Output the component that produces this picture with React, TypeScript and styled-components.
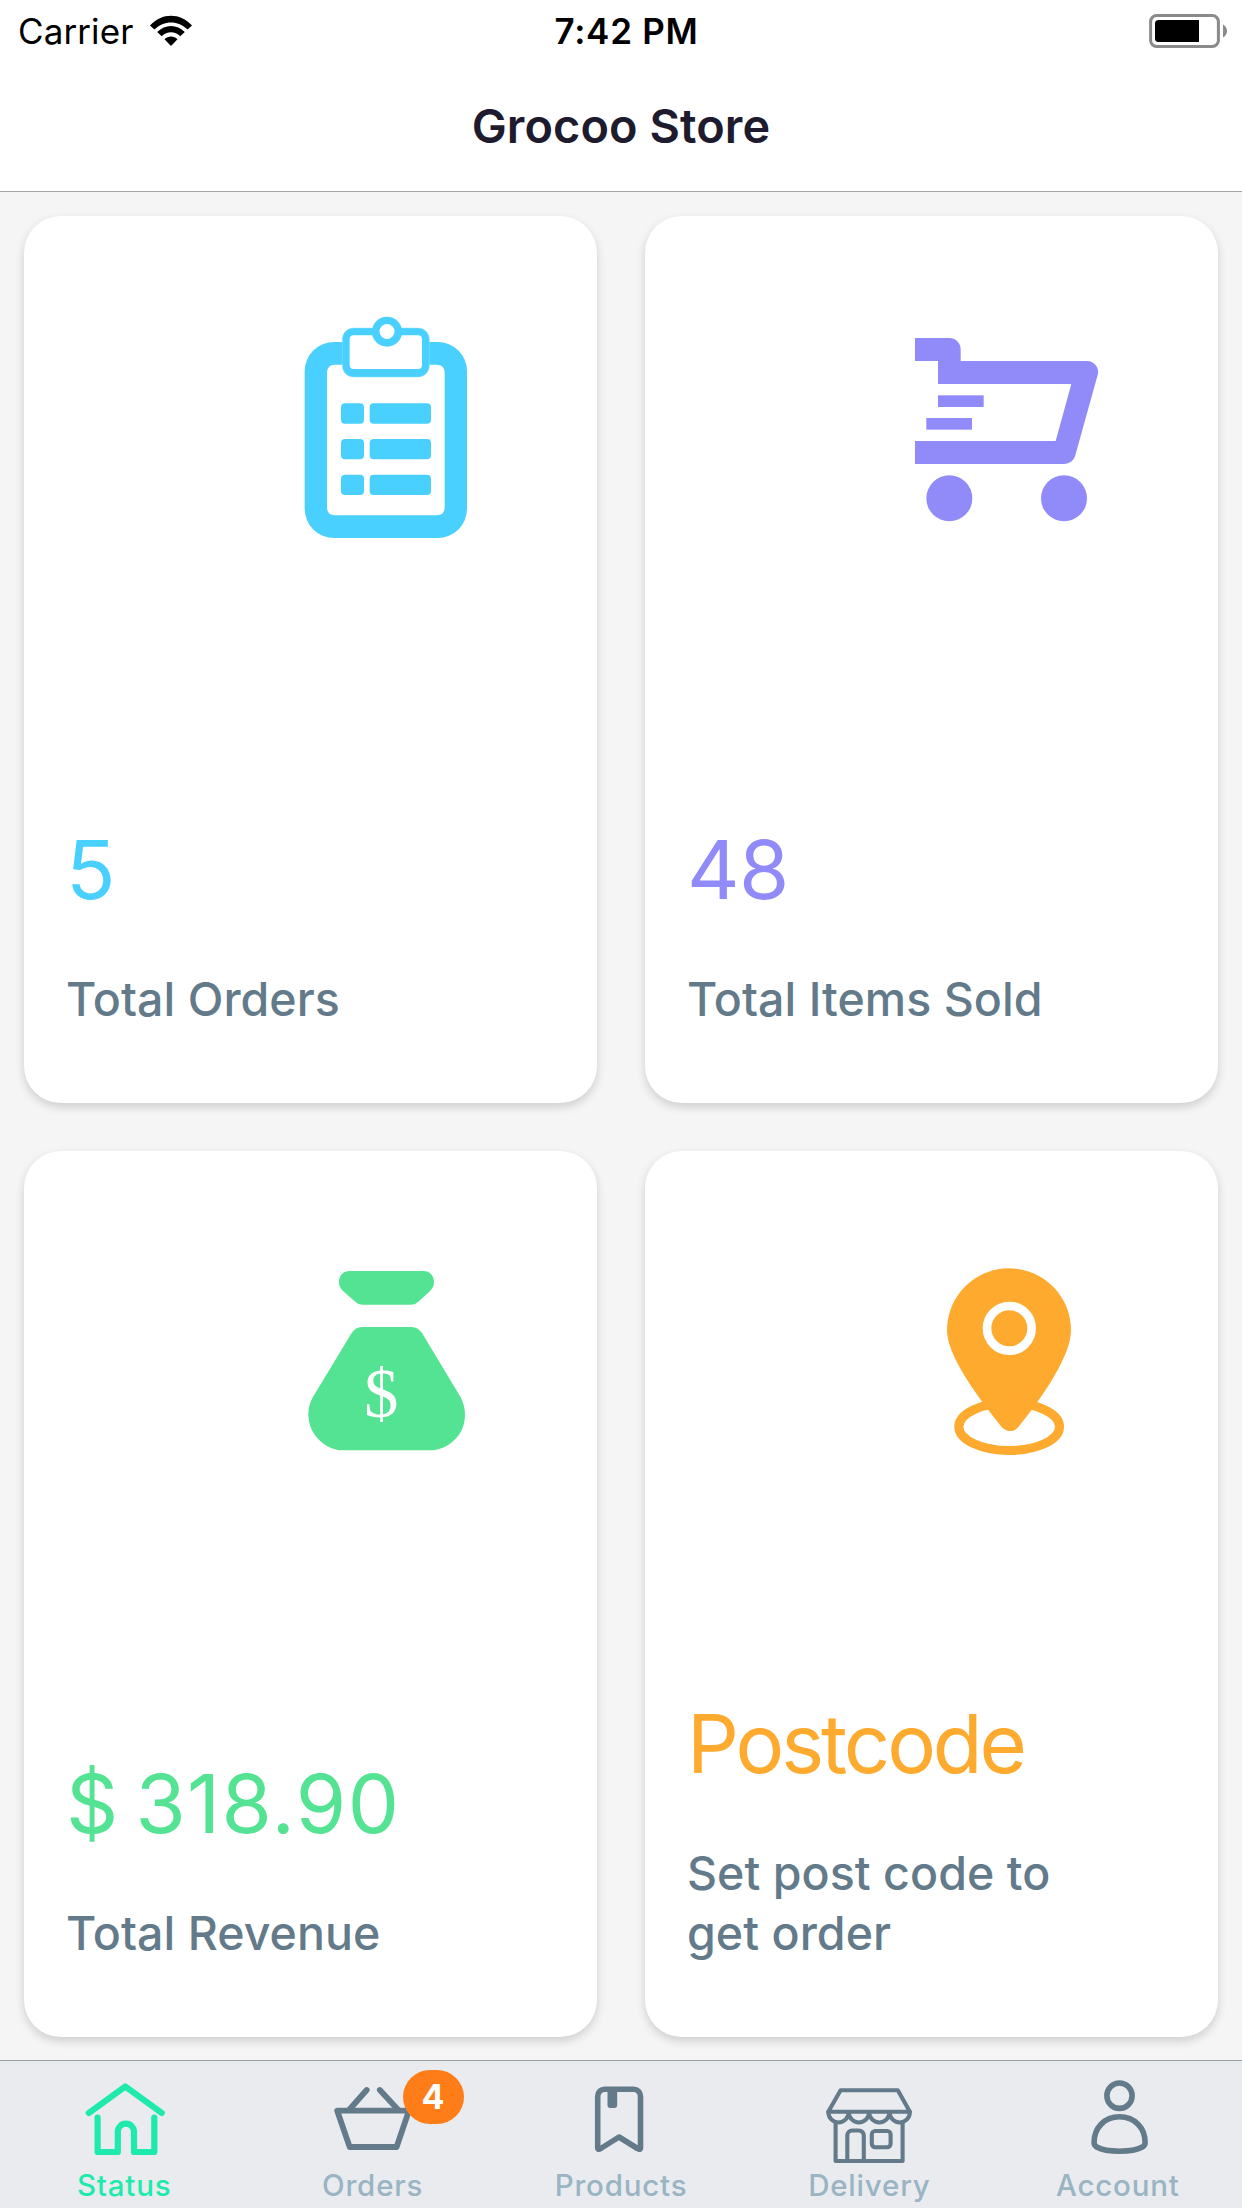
import React from "react";
import styled, { createGlobalStyle } from "styled-components";

const GlobalStyle = createGlobalStyle`
  * { box-sizing: border-box; }
  body { margin: 0; background: #f5f5f5; }
`;

const Screen = styled.div`
  width: 1242px;
  height: 2208px;
  display: flex;
  flex-direction: column;
  overflow: hidden;
  background: #f5f5f5;
  font-family: Inter, "Liberation Sans", sans-serif;
`;

const Header = styled.header`
  height: 192px;
  flex: none;
  background: #fff;
  border-bottom: 1px solid #a3a3a3;
`;

const StatusBar = styled.div`
  height: 60px;
  padding: 0 14px 0 18px;
  display: grid;
  grid-template-columns: 1fr auto 1fr;
  align-items: center;
  color: #000;
  font-size: 35px;
  line-height: 62px;
`;

const Carrier = styled.div`
  display: flex;
  align-items: center;
  gap: 16px;
  letter-spacing: 0.1px;
`;

const Clock = styled.div`
  padding-left: 7px;
  font-weight: 600;
  letter-spacing: 0.7px;
`;

const BatterySlot = styled.div`
  display: flex;
  justify-content: flex-end;
`;

const Title = styled.h1`
  margin: 0;
  text-align: center;
  font-size: 46.8px;
  font-weight: 600;
  letter-spacing: 0.1px;
  line-height: 132px;
  color: #1d1b2d;
`;

const Grid = styled.main`
  flex: 1;
  padding: 24px 24px 23px;
  display: grid;
  grid-template-columns: 1fr 1fr;
  grid-template-rows: 887px 886px;
  gap: 48px;
`;

const Card = styled.section<{ $accent: string }>`
  display: flex;
  flex-direction: column;
  padding: 84px 42px 74px;
  border-radius: 37px;
  background: #fff;
  color: ${(p) => p.$accent};
  box-shadow: 0 4px 10px rgba(0, 0, 0, 0.16);
`;

const CardIcon = styled.svg`
  width: 220px;
  height: 260px;
  margin: 0 0 auto 210px;
  fill: currentColor;
`;

const Value = styled.div<{ $spacing: number; $wordSpacing?: number }>`
  font-size: 81.4px;
  line-height: 100px;
  margin-bottom: 49px;
  letter-spacing: ${(p) => p.$spacing}px;
  word-spacing: ${(p) => p.$wordSpacing ?? 0}px;
  white-space: nowrap;
`;

const Label = styled.div`
  max-width: 400px;
  font-size: 46.5px;
  font-weight: 500;
  letter-spacing: 0.05px;
  line-height: 60px;
  color: #637a8a;
`;

const TabBar = styled.nav`
  height: 148px;
  flex: none;
  display: grid;
  grid-template-columns: repeat(5, 1fr);
  background: #eaebef;
  border-top: 1px solid #97a0a4;
`;

const Tab = styled.div<{ $active?: boolean }>`
  position: relative;
  display: flex;
  flex-direction: column;
  align-items: center;
  padding-top: 5px;
  color: ${(p) => (p.$active ? "#1deaac" : "#637a8a")};
`;

const TabIcon = styled.svg`
  width: 100px;
  height: 100px;
  fill: none;
  stroke: currentColor;
  stroke-linecap: round;
  stroke-linejoin: round;
`;

const TabLabel = styled.span<{ $active?: boolean }>`
  font-size: 29.5px;
  font-weight: 500;
  letter-spacing: 0.8px;
  line-height: 39px;
  color: ${(p) => (p.$active ? "#1deaac" : "#99b4c3")};
`;

const Badge = styled.span`
  position: absolute;
  top: 9px;
  left: 155px;
  width: 61px;
  height: 54px;
  padding-right: 2px;
  border-radius: 27px;
  background: #ff7d18;
  color: #fff;
  font-size: 34px;
  font-weight: 700;
  line-height: 54px;
  text-align: center;
`;

const WifiIcon = () => (
  <svg width="44" height="32" viewBox="0 0 44 32">
    <path d="M1 10.5C13-2.5 31-2.5 43 10.5L38.6 14.6C29 5 15 5 5.4 14.6Z" />
    <path d="M8.2 17C16 9 28 9 35.8 17L31.3 21.3C26 16 18 16 12.7 21.3Z" />
    <path d="M15.5 24.2C19.2 20.6 24.8 20.6 28.5 24.2L22 31Z" />
  </svg>
);

const BatteryIcon = () => (
  <svg width="79" height="34" viewBox="0 0 79 34">
    <rect x="1.6" y="1.6" width="67.8" height="30.8" rx="6" fill="none" stroke="#8a8a8a" strokeWidth="3" />
    <path d="M9.5 6H50V28H9.5A3.5 3.5 0 0 1 6 24.5V9.5A3.5 3.5 0 0 1 9.5 6Z" />
    <path d="M74 10.5C79.3 13 79.3 21 74 23.5Z" fill="#8a8a8a" />
  </svg>
);

const ClipboardIcon = () => (
  <CardIcon viewBox="-12 0 660 780">
    <rect x="74" y="126" width="487" height="588" rx="88" />
    <rect x="141" y="194" width="353" height="452" rx="22" fill="#fff" />
    <rect x="187" y="84" width="261" height="147" rx="34" stroke="#8be0fc" strokeWidth="1.5" />
    <rect x="209" y="106" width="217" height="101" rx="12" fill="#fff" />
    <circle cx="321" cy="95" r="45" />
    <circle cx="321" cy="94.5" r="22.5" fill="#fff" />
    {[310, 417, 524].map((y) => (
      <React.Fragment key={y}>
        <rect x="183" y={y} width="69" height="61" rx="12" />
        <rect x="269" y={y} width="184" height="61" rx="12" />
      </React.Fragment>
    ))}
  </CardIcon>
);

const CartIcon = () => (
  <CardIcon viewBox="21 -30 660 780">
    <path d="M75 84H178A34 34 0 0 1 212 118V153H592A33 33 0 0 1 623 195L556 436A34 34 0 0 1 523 462H75V393H497L544 222H144V153H75Z" />
    <rect x="144" y="256" width="137" height="35" />
    <rect x="109" y="324" width="137" height="35" />
    <circle cx="178" cy="565" r="69" />
    <circle cx="522" cy="565" r="69" />
  </CardIcon>
);

const MoneyIcon = () => (
  <CardIcon viewBox="-12 -15 660 780">
    <path d="M208 93H431C449 93 462 107 462 126C462 136 458 145 451 152L415 185Q406 194 394 194H247Q235 194 226 185L188 152C181 145 177 136 177 126C177 107 190 93 208 93Z" />
    <path d="M246 261H394Q414 261 426 279L542 472C560 506 560 552 537 584C515 613 484 631 450 631H190C156 631 125 613 104 584C81 552 79 508 97 474L215 279Q227 261 246 261Z" />
    <text x="252" y="532" fontSize="207" fontFamily="'Liberation Serif', serif" fill="#fff">$</text>
  </CardIcon>
);

const PinIcon = () => (
  <CardIcon viewBox="-69 -15 660 780">
    <ellipse cx="267.5" cy="560" rx="151" ry="71.5" fill="none" stroke="currentColor" strokeWidth="27" />
    <path d="M267 85C164 85 81 168 81 271C81 345 166 463 245 561Q256 573 270 573Q285 573 295 561C374 463 453 345 453 271C453 168 370 85 267 85Z" />
    <circle cx="268" cy="265" r="67" fill="none" stroke="#fff" strokeWidth="26" />
  </CardIcon>
);

const HomeIcon = () => (
  <TabIcon viewBox="74.2 36 100 100" strokeWidth="6.2">
    <path d="M89 83L125.5 56.5L162 83" />
    <path d="M97.8 87.5V122H118V101.8A8.1 8.1 0 0 1 134.2 101.8V122H154.5V87.5" />
  </TabIcon>
);

const BasketIcon = () => (
  <TabIcon viewBox="322.6 36 100 100" strokeWidth="5.8">
    <path d="M336.8 80.7H408.5L396.2 117H349.3Z" />
    <path d="M366.3 60L349.5 79M379.4 60L397 79" />
  </TabIcon>
);

const BookmarkIcon = () => (
  <TabIcon viewBox="571 36 100 100" strokeWidth="5.6">
    <path d="M605 59.2H633.5A7 7 0 0 1 640.5 66.2V117.5Q640.5 120.5 637.5 118.5L619 107L600.8 118.5Q597.7 120.5 597.7 117.5V66.2A7 7 0 0 1 605 59.2Z" />
    <path d="M607.5 59H617.2V75Q617.2 78 614.2 78H610.5Q607.5 78 607.5 75Z" fill="currentColor" stroke="none" />
  </TabIcon>
);

const ShopIcon = () => (
  <TabIcon viewBox="819.4 36 100 100" strokeWidth="4.1">
    <path d="M841 60.2H898.2L910.3 81.7H828.7Z" />
    <path d="M828.7 82A10.2 10.5 0 0 0 849.1 82A10.2 10.5 0 0 0 869.5 82A10.2 10.5 0 0 0 889.9 82A10.2 10.5 0 0 0 910.3 82" />
    <path d="M836 93V131H903V93" />
    <path d="M847.7 131V105.5A5 5 0 0 1 852.7 100.5H859.2A5 5 0 0 1 864.2 105.5V131" />
    <rect x="872.2" y="101" width="18.8" height="16.3" rx="3.5" />
  </TabIcon>
);

const PersonIcon = () => (
  <TabIcon viewBox="1067.8 36 100 100" strokeWidth="5.6">
    <ellipse cx="1119.3" cy="65.7" rx="12.6" ry="12.7" />
    <path d="M1119.3 86.8C1104 86.8 1093.9 98 1093.9 112.5Q1093.9 115.5 1096.5 117C1102 120 1110 121.2 1119.3 121.2C1128.6 121.2 1136.6 120 1142.1 117Q1144.9 115.5 1144.9 112.5C1144.9 98 1134.6 86.8 1119.3 86.8Z" />
  </TabIcon>
);

const cards = [
  { accent: "#49d0ff", Icon: ClipboardIcon, value: "5", label: "Total Orders", spacing: 0 },
  { accent: "#918bfa", Icon: CartIcon, value: "48", label: "Total Items Sold", spacing: -0.5 },
  { accent: "#54e392", Icon: MoneyIcon, value: "$ 318.90", label: "Total Revenue", spacing: 1.4, wordSpacing: -8.5 },
  { accent: "#fdaa2e", Icon: PinIcon, value: "Postcode", label: "Set post code to get order", spacing: -3.1 },
];

const tabs = [
  { label: "Status", Icon: HomeIcon, active: true },
  { label: "Orders", Icon: BasketIcon, badge: 4 },
  { label: "Products", Icon: BookmarkIcon },
  { label: "Delivery", Icon: ShopIcon },
  { label: "Account", Icon: PersonIcon },
];

export default function App() {
  return (
    <Screen>
      <GlobalStyle />
      <Header>
        <StatusBar>
          <Carrier>
            Carrier
            <WifiIcon />
          </Carrier>
          <Clock>7:42 PM</Clock>
          <BatterySlot>
            <BatteryIcon />
          </BatterySlot>
        </StatusBar>
        <Title>Grocoo Store</Title>
      </Header>
      <Grid>
        {cards.map(({ accent, Icon, value, label, spacing, wordSpacing }) => (
          <Card key={label} $accent={accent}>
            <Icon />
            <Value $spacing={spacing} $wordSpacing={wordSpacing}>
              {value}
            </Value>
            <Label>{label}</Label>
          </Card>
        ))}
      </Grid>
      <TabBar>
        {tabs.map(({ label, Icon, active, badge }) => (
          <Tab key={label} $active={active}>
            <Icon />
            <TabLabel $active={active}>{label}</TabLabel>
            {badge && <Badge>{badge}</Badge>}
          </Tab>
        ))}
      </TabBar>
    </Screen>
  );
}
